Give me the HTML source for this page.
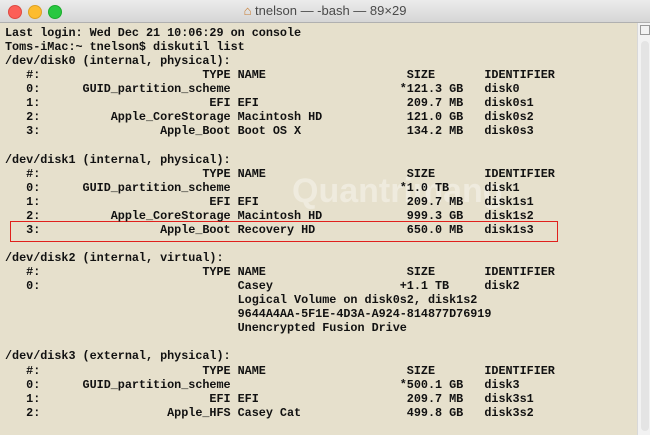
<!DOCTYPE html>
<html><head><meta charset="utf-8"><style>
body{margin:0;width:650px;height:435px;overflow:hidden;background:#e6e0cc;position:relative;font-family:"Liberation Mono",monospace}
.tb{position:absolute;left:0;top:0;width:650px;height:22px;background:linear-gradient(#ececec,#d6d6d6);border-bottom:1px solid #b0b0b0}
.dot{position:absolute;top:5px;width:12px;height:12px;border-radius:50%}
.title{position:absolute;top:3px;left:0;width:650px;text-align:center;font:13px "Liberation Sans",sans-serif;color:#4a4a4a}
pre{position:absolute;left:5px;top:26px;margin:0;font-size:11.8px;line-height:14.07px;color:#111;font-weight:bold;letter-spacing:-0.03px}
.sb{position:absolute;left:637px;top:23px;width:13px;height:412px;background:#f2f2f2;border-left:1px solid #d8d8d8}
.box{position:absolute;left:10px;top:221px;width:546px;height:19px;border:1.5px solid #e0201c}
.wm{position:absolute;left:292px;top:172px;font:bold 34px "Liberation Sans",sans-serif;color:rgba(255,255,255,0.35)}
</style></head><body>
<div class="tb">
<div class="dot" style="left:8px;background:#fc5f57;border:0.5px solid #de4a42"></div>
<div class="dot" style="left:28px;background:#fdbc2e;border:0.5px solid #dea123"></div>
<div class="dot" style="left:48px;background:#28c840;border:0.5px solid #1aab2c"></div>
<div class="title"><span style="color:#c77b30">⌂</span> tnelson — -bash — 89×29</div>
</div>
<div class="sb"><div style="position:absolute;left:3px;top:18px;width:8px;height:390px;background:#e4e4e4;border-radius:4px"></div><div style="position:absolute;left:2px;top:2px;width:8px;height:8px;border:1px solid #999;font-size:0"></div></div>
<div class="wm">Quantrimang</div>
<div class="box"></div>
<pre>Last login: Wed Dec 21 10:06:29 on console
Toms-iMac:~ tnelson$ diskutil list
/dev/disk0 (internal, physical):
   #:                       TYPE NAME                    SIZE       IDENTIFIER
   0:      GUID_partition_scheme                        *121.3 GB   disk0
   1:                        EFI EFI                     209.7 MB   disk0s1
   2:          Apple_CoreStorage Macintosh HD            121.0 GB   disk0s2
   3:                 Apple_Boot Boot OS X               134.2 MB   disk0s3

/dev/disk1 (internal, physical):
   #:                       TYPE NAME                    SIZE       IDENTIFIER
   0:      GUID_partition_scheme                        *1.0 TB     disk1
   1:                        EFI EFI                     209.7 MB   disk1s1
   2:          Apple_CoreStorage Macintosh HD            999.3 GB   disk1s2
   3:                 Apple_Boot Recovery HD             650.0 MB   disk1s3

/dev/disk2 (internal, virtual):
   #:                       TYPE NAME                    SIZE       IDENTIFIER
   0:                            Casey                  +1.1 TB     disk2
                                 Logical Volume on disk0s2, disk1s2
                                 9644A4AA-5F1E-4D3A-A924-814877D76919
                                 Unencrypted Fusion Drive

/dev/disk3 (external, physical):
   #:                       TYPE NAME                    SIZE       IDENTIFIER
   0:      GUID_partition_scheme                        *500.1 GB   disk3
   1:                        EFI EFI                     209.7 MB   disk3s1
   2:                  Apple_HFS Casey Cat               499.8 GB   disk3s2</pre>
</body></html>
